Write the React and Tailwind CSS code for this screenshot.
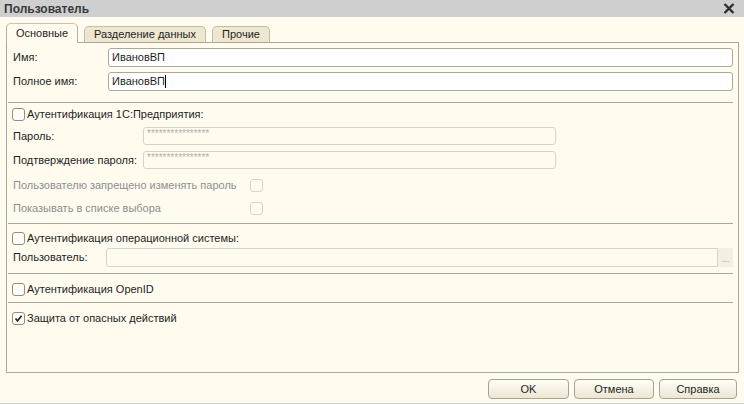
import React from 'react';

const Check = ({ checked = false, disabled = false }) => (
  <span
    className={
      'w-[13px] h-[13px] rounded-[3px] border flex items-center justify-center shrink-0 ' +
      (disabled ? 'border-[#d9d5c8] bg-[#fffbee]' : 'border-[#8e8e8e] bg-[#fffdf6]')
    }
  >
    {checked && (
      <svg width="9" height="9" viewBox="0 0 9 9">
        <path d="M1.5 4.5 L3.5 6.8 L7.6 1.8" fill="none" stroke="#2a2a2a" strokeWidth="1.8" />
      </svg>
    )}
  </span>
);

const Sep = ({ className = '' }) => <div className={'h-px bg-[#aca899] ml-px mr-[5px] ' + className}></div>;

const App = () => {
  return (
    <div className="w-[744px] h-[404px] bg-[#fffbee] flex flex-col text-[11px] whitespace-nowrap text-[#1e1e1e] font-['Liberation_Sans',Arial,sans-serif] overflow-hidden">
      {/* Заголовок */}
      <div className="h-[17px] bg-[#cfcfcf] flex items-center justify-between pl-[4px] pr-[9px]">
        <span className="font-bold text-[12px] text-[#3a3a3a] leading-none">Пользователь</span>
        <svg width="12" height="11" viewBox="0 0 12 11">
          <path d="M1.5 1 L10.5 10 M10.5 1 L1.5 10" stroke="#2e2e2e" strokeWidth="2.4" />
        </svg>
      </div>

      {/* Вкладки */}
      <div className="h-[25px] flex items-end pl-[6px] gap-[6px] relative z-10">
        <div className="w-[72px] h-[20px] -mb-px border border-b-0 border-[#b5af9b] border-t-[#e2c27f] rounded-t-[5px] bg-[#fffbee] flex items-center justify-center pb-[1px]">
          Основные
        </div>
        <div className="w-[122px] h-[16px] border border-b-0 border-[#c3bca6] rounded-t-[5px] bg-[#eee7d0] flex items-center justify-center">
          Разделение данных
        </div>
        <div className="w-[58px] h-[16px] border border-b-0 border-[#c3bca6] rounded-t-[5px] bg-[#eee7d0] flex items-center justify-center">
          Прочие
        </div>
      </div>

      {/* Панель */}
      <div className="ml-[6px] w-[733px] h-[331px] border border-[#aca899] flex flex-col">
        <div className="mt-[5px] h-[19px] flex items-center">
          <span className="w-[101px] pl-[6px]">Имя:</span>
          <div className="flex-1 mr-[5px] h-full bg-white border border-[#aca899] rounded-[3px] flex items-center px-[3px]">ИвановВП</div>
        </div>
        <div className="mt-[5px] h-[19px] flex items-center">
          <span className="w-[101px] pl-[6px]">Полное имя:</span>
          <div className="flex-1 mr-[5px] h-full bg-white border border-[#aca899] rounded-[3px] flex items-center px-[3px]">
            ИвановВП<span className="w-px h-[13px] bg-black"></span>
          </div>
        </div>

        <Sep className="mt-[11px]" />

        <div className="mt-[3px] h-[16px] flex items-center pl-[5px] gap-[2px]">
          <Check />
          <span>Аутентификация 1С:Предприятия:</span>
        </div>
        <div className="mt-[5px] h-[18px] flex items-center">
          <span className="w-[136px] pl-[6px]">Пароль:</span>
          <div className="w-[413px] h-full border border-[#d6d3c9] rounded-[3px] px-[3px] text-[10px] leading-[12px] text-[#b0b0b0]">****************</div>
        </div>
        <div className="mt-[6px] h-[18px] flex items-center">
          <span className="w-[136px] pl-[6px]">Подтверждение пароля:</span>
          <div className="w-[413px] h-full border border-[#d6d3c9] rounded-[3px] px-[3px] text-[10px] leading-[12px] text-[#b0b0b0]">****************</div>
        </div>
        <div className="mt-[9px] h-[15px] flex items-center text-[#8e8e8e]">
          <span className="w-[243px] pl-[6px]">Пользователю запрещено изменять пароль</span>
          <Check disabled />
        </div>
        <div className="mt-[8px] h-[15px] flex items-center text-[#8e8e8e]">
          <span className="w-[243px] pl-[6px]">Показывать в списке выбора</span>
          <Check disabled />
        </div>

        <Sep className="mt-[7px]" />

        <div className="mt-[7px] h-[15px] flex items-center pl-[5px] gap-[2px]">
          <Check />
          <span>Аутентификация операционной системы:</span>
        </div>
        <div className="mt-[2px] h-[19px] flex items-center">
          <span className="w-[99px] pl-[6px]">Пользователь:</span>
          <div className="flex-1 h-full border border-[#d6d3c9] rounded-l-[3px]"></div>
          <div className="w-[15px] mr-[5px] h-full bg-[#f3efe1] flex items-end justify-center pb-[3px] text-[9px] leading-none text-[#9a9a9a]">...</div>
        </div>

        <Sep className="mt-[6px]" />

        <div className="mt-[8px] h-[15px] flex items-center pl-[5px] gap-[2px]">
          <Check />
          <span>Аутентификация OpenID</span>
        </div>

        <Sep className="mt-[5px]" />

        <div className="mt-[8px] h-[15px] flex items-center pl-[5px] gap-[2px]">
          <Check checked />
          <span>Защита от опасных действий</span>
        </div>
      </div>

      {/* Кнопки */}
      <div className="mt-[6px] h-[20px] flex justify-end gap-[5px] pr-[7px]">
        <button className="w-[81px] h-full rounded-[4px] border border-[#a7a497] bg-gradient-to-b from-[#fffef8] to-[#ece6d2] text-[11px] text-[#1e1e1e]">OK</button>
        <button className="w-[80px] h-full rounded-[4px] border border-[#a7a497] bg-gradient-to-b from-[#fffef8] to-[#ece6d2] text-[11px] text-[#1e1e1e]">Отмена</button>
        <button className="w-[78px] h-full rounded-[4px] border border-[#a7a497] bg-gradient-to-b from-[#fffef8] to-[#ece6d2] text-[11px] text-[#1e1e1e]">Справка</button>
      </div>
      <div className="mt-auto h-px bg-[#d2d0c8]"></div>
    </div>
  );
};

export default App;
